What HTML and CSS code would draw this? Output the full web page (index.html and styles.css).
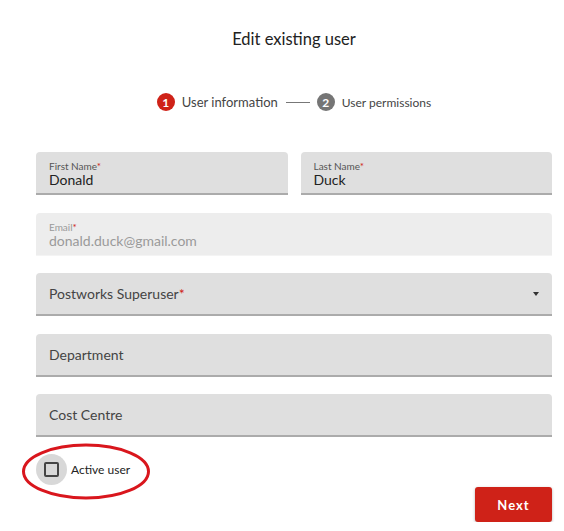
FILE: index.html
```html
<!DOCTYPE html>
<html>
<head>
<title>Edit existing user</title>
<link rel="stylesheet" href="styles.css">
</head>
<body>

<div class="page">

  <h1 class="title">Edit existing user</h1>

  <div class="stepper">
    <span class="step-num active">1</span>
    <span class="step-label">User information</span>
    <span class="step-line"></span>
    <span class="step-num">2</span>
    <span class="step-label small">User permissions</span>
  </div>

  <div class="form">
    <div class="row">
      <div class="field">
        <div class="lbl">First Name<span class="req">*</span></div>
        <div class="val">Donald</div>
      </div>
      <div class="field">
        <div class="lbl">Last Name<span class="req">*</span></div>
        <div class="val">Duck</div>
      </div>
    </div>

    <div class="field disabled">
      <div class="lbl">Email<span class="req">*</span></div>
      <div class="val">donald.duck@gmail.com</div>
    </div>

    <div class="field plain select">
      <span>Postworks Superuser<span class="req">*</span></span>
      <span class="arrow"></span>
    </div>

    <div class="field plain">
      <span>Department</span>
    </div>

    <div class="field plain">
      <span>Cost Centre</span>
    </div>
  </div>

  <div class="check-row">
    <span class="check-hit"><span class="check-box"></span></span>
    <span class="check-label">Active user</span>
    <svg class="mark" width="130" height="59" viewBox="0 0 130 59">
      <ellipse cx="65" cy="29.5" rx="62.5" ry="26.5" fill="none" stroke="#d9161d" stroke-width="3"/>
    </svg>
  </div>

  <div class="actions">
    <button class="btn-next">Next</button>
  </div>

</div>

</body>
</html>
```

FILE: styles.css
```css
body {
	margin: 0;
	padding: 0;
	background-color: #fff;
	font-family: Lato, "Noto Sans", Arial, sans-serif;
	color: #222;
}

.page {
	padding: 0 12px 0 36px;
}

.title {
	margin: 0;
	padding-top: 29px;
	font-size: 16.5px;
	line-height: 20px;
	font-weight: normal;
	text-align: center;
	color: #222;
}

/* stepper */

.stepper {
	display: flex;
	justify-content: center;
	align-items: center;
	margin-top: 43px;
	height: 20px;
}

.step-num {
	display: flex;
	align-items: center;
	justify-content: center;
	width: 18px;
	height: 18px;
	border-radius: 50%;
	background-color: #757575;
	color: #fff;
	font-size: 12px;
	font-weight: bold;
}

.step-num.active {
	background-color: #cf2218;
}

.step-label {
	margin-left: 7px;
	font-size: 13px;
	color: #444;
}

.step-label.small {
	font-size: 12px;
}

.step-line {
	width: 24px;
	height: 1px;
	margin: 0 7px 0 8px;
	background-color: #777;
}

/* form */

.form {
	display: flex;
	flex-direction: column;
	gap: 17.5px;
	margin-top: 40px;
}

.row {
	display: flex;
	gap: 13px;
}

.row .field {
	flex: 1;
}

.field {
	padding: 9px 13px 0 13px;
	box-sizing: content-box;
	height: 32px;
	background-color: #dfdfdf;
	border-bottom: 2px solid #ababab;
	border-radius: 4px 4px 0 0;
}

.lbl {
	font-size: 10px;
	line-height: 11px;
	color: #555;
}

.val {
	font-size: 14px;
	line-height: 16px;
	color: #222;
}

.req {
	color: #cf2218;
}

.field.disabled {
	background-color: #ededed;
	border-bottom: 1px solid #f4f4f4;
	height: 33px;
}

.field.disabled .lbl,
.field.disabled .val {
	color: #9a9a9a;
}

.field.plain {
	display: flex;
	align-items: center;
	justify-content: space-between;
	padding-top: 0;
	height: 41px;
	font-size: 14px;
	color: #444;
}

.arrow {
	width: 0;
	height: 0;
	border-left: 3.5px solid transparent;
	border-right: 3.5px solid transparent;
	border-top: 4px solid #333;
}

/* checkbox */

.check-row {
	position: relative;
	display: flex;
	align-items: center;
	margin-top: 17px;
}

.check-hit {
	display: flex;
	align-items: center;
	justify-content: center;
	width: 31px;
	height: 31px;
	border-radius: 50%;
	background-color: #d8d8d8;
}

.check-box {
	width: 11px;
	height: 11px;
	border: 2px solid #444;
	border-radius: 2px;
}

.check-label {
	margin-left: 4px;
	font-size: 12px;
	color: #222;
}

.mark {
	position: absolute;
	left: -15px;
	top: -12px;
}

/* actions */

.actions {
	display: flex;
	justify-content: flex-end;
	margin-top: 2px;
}

.btn-next {
	width: 77px;
	height: 35px;
	border: 0;
	border-radius: 3px;
	background-color: #cf2218;
	box-shadow: 0 1px 3px rgba(0, 0, 0, 0.3);
	color: #fff;
	font-family: Lato, "Noto Sans", Arial, sans-serif;
	font-size: 13px;
	font-weight: bold;
	letter-spacing: 1px;
}
```
